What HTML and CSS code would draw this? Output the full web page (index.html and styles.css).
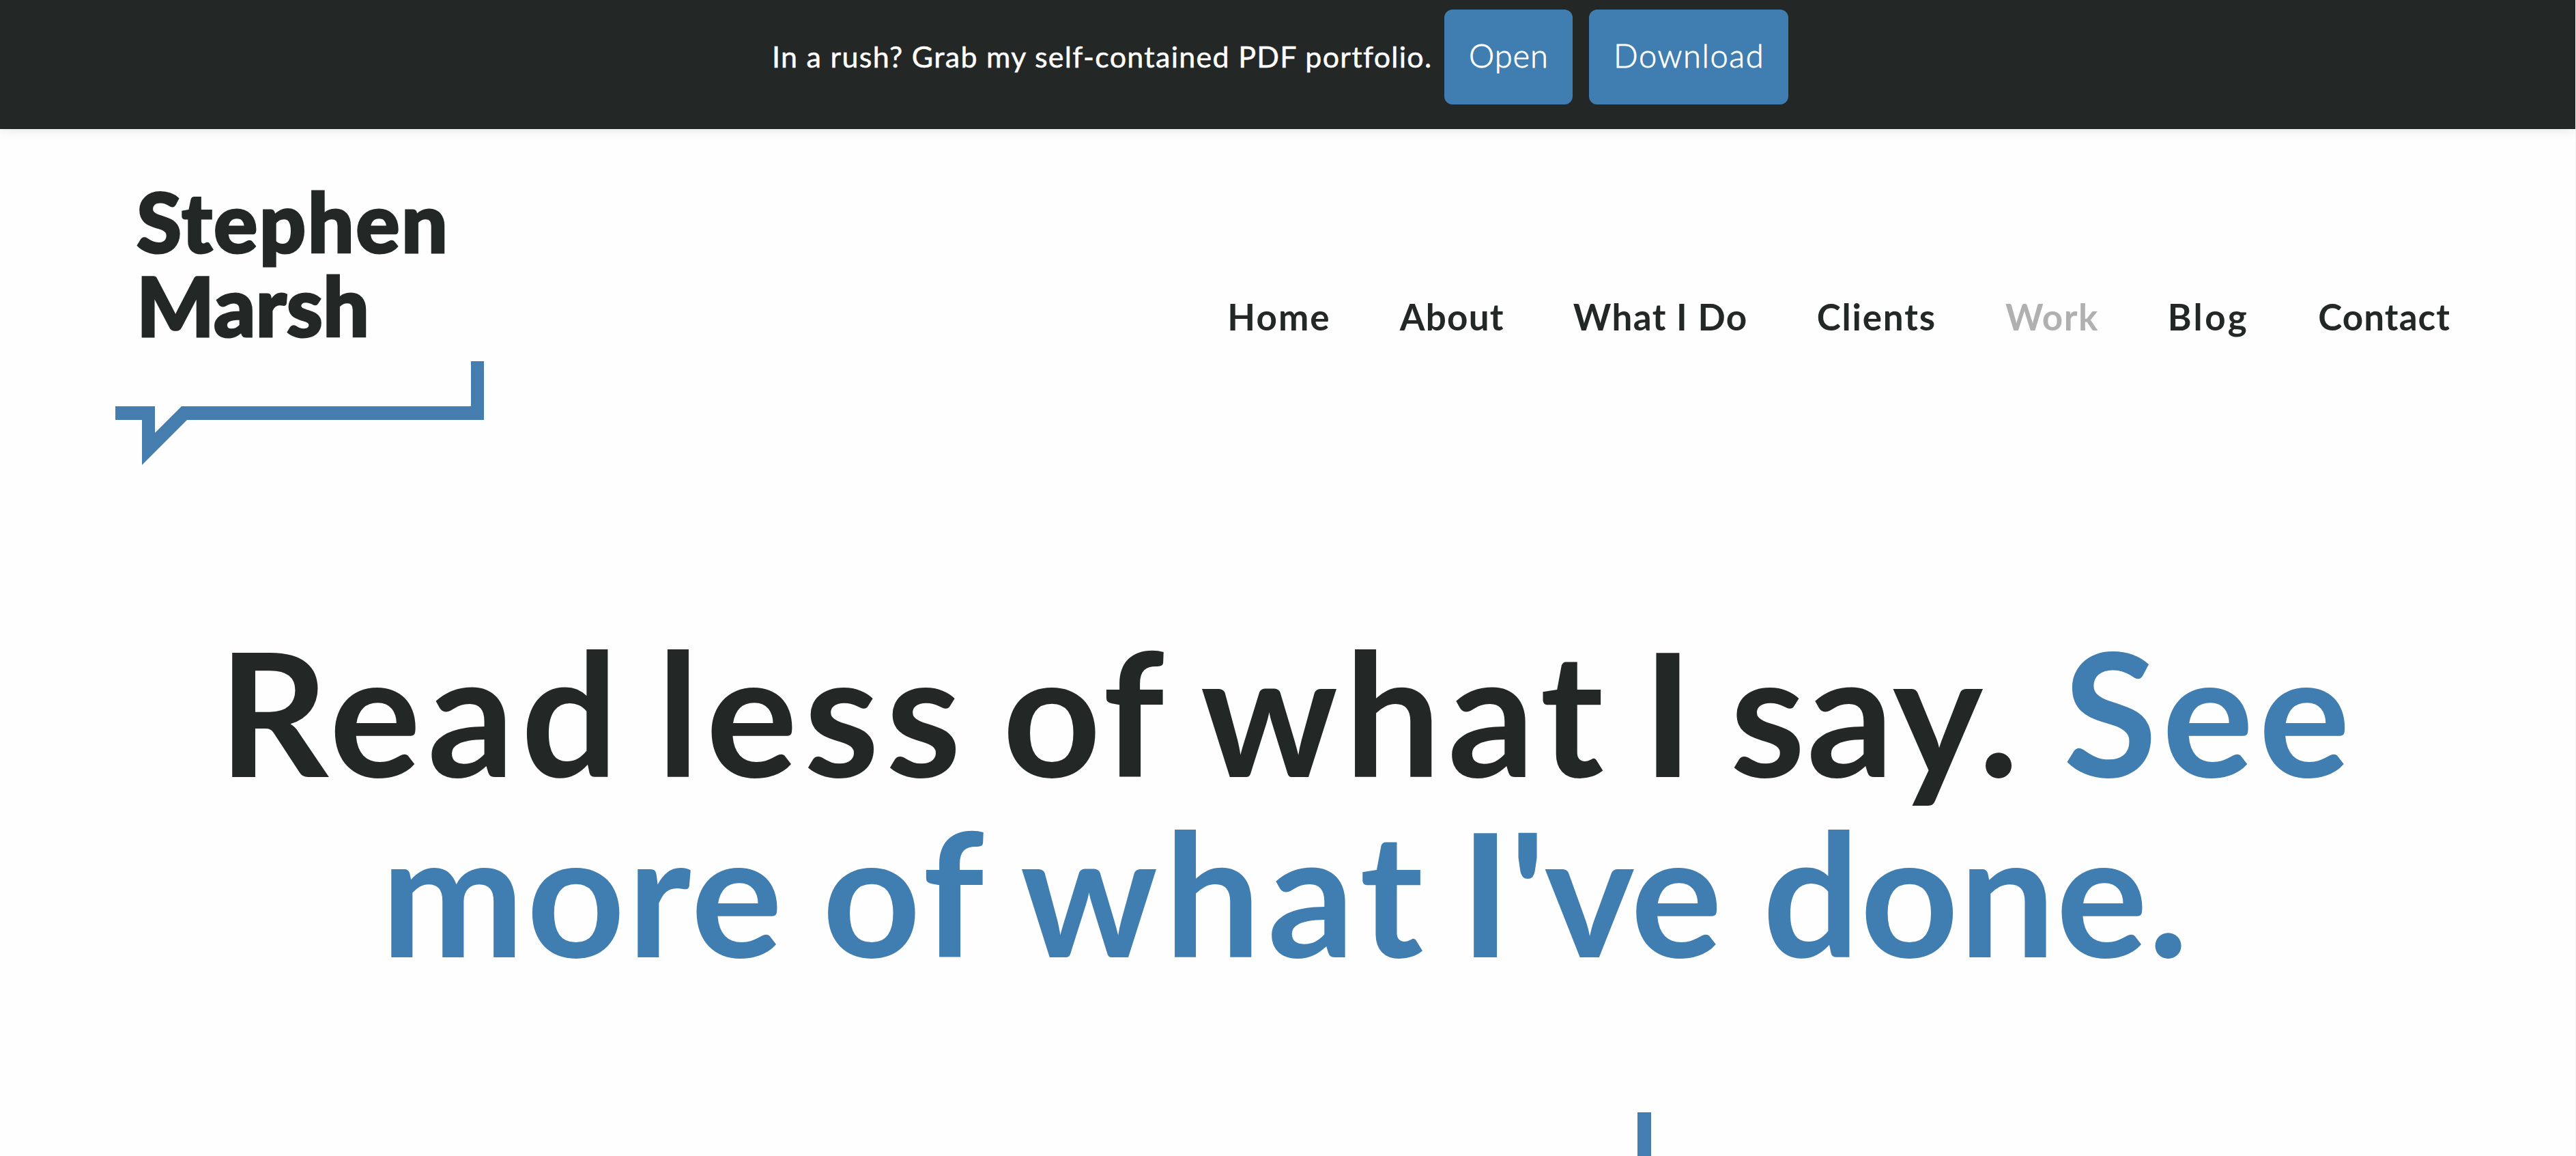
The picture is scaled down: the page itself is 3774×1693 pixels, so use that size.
FILE: index.html
```html
<!DOCTYPE html>
<html lang="en">
<head>
    <meta charset="UTF-8">
    <meta name="viewport" content="width=device-width, initial-scale=1.0">
    <title>Stephen Marsh - Work</title>
    <link rel="stylesheet" href="styles.css">
</head>
<body>
    <div class="notice">
        <p class="notice-text">In a rush? Grab my self-contained PDF portfolio.</p>
        <a class="button open" href="#">Open</a>
        <a class="button download" href="#">Download</a>
    </div>

    <header class="header">
        <a class="logo" href="#">
            <svg viewBox="0 -40 540 460" width="540" height="460">
                <text class="logo-name" x="31" y="105" textLength="456">Stephen</text>
                <text class="logo-name" x="31" y="228" textLength="341">Marsh</text>
                <polygon class="logo-bubble" points="0,330 58,330 58,369 97,330 521,330 521,264 540,264 540,350 105,350 39,416 39,350 0,350" />
            </svg>
        </a>
        <nav class="nav">
            <a class="home" href="#">Home</a>
            <a class="about" href="#">About</a>
            <a class="what" href="#">What I Do</a>
            <a class="clients" href="#">Clients</a>
            <a class="work active" href="#">Work</a>
            <a class="blog" href="#">Blog</a>
            <a class="contact" href="#">Contact</a>
        </nav>
    </header>

    <main>
        <h1 class="headline">
            <span class="line first">
                <span class="wide">Read</span>
                <span class="wide">less</span>
                <span class="of">of</span>
                <span class="wide">what</span>
                <span>I</span>
                <span class="say">say.</span>
                <span class="see blue">See</span>
            </span>
            <span class="line second blue">
                <span class="more">more</span>
                <span class="of">of</span>
                <span class="wide">what</span>
                <span class="ive">I've</span>
                <span class="done">done.</span>
            </span>
        </h1>
        <div class="divider"></div>
    </main>
</body>
</html>
```
FILE: styles.css
```css
* { box-sizing: border-box; }
body {
    margin: 0;
    height: 1693px;
    overflow: hidden;
    background: #fefefe;
    border-right: 1px solid #f3f3f3;
    color: #232726;
    font-family: Lato, sans-serif;
}
a { color: inherit; text-decoration: none; }

/* top notice */
.notice {
    display: flex;
    height: 189px;
    padding: 14px 0 0 1131px;
    background: #232726;
    box-shadow: 0 0 18px rgba(0, 0, 0, 0.12);
    color: #fff;
}
.notice-text {
    width: 985px;
    margin: 0;
    font-size: 43px;
    line-height: 138px;
    letter-spacing: 1.29px;
    white-space: nowrap;
    -webkit-text-stroke: 0.5px #fff;
}
.button {
    height: 139px;
    padding-left: 36px;
    border-radius: 12px;
    background: #407db1;
    font-size: 47px;
    font-weight: 300;
    line-height: 135px;
    -webkit-text-stroke: 0.8px #fff;
}
.open { width: 188px; margin-right: 24px; letter-spacing: 1px; }
.download { width: 292px; letter-spacing: 1.6px; }

/* header */
.header {
    display: flex;
    justify-content: space-between;
    height: 720px;
    padding: 36px 183px 0 169px;
}
.logo { height: 460px; }
.logo svg { display: block; }
.logo-name {
    fill: #232726;
    stroke: #232726;
    stroke-width: 3px;
    font-size: 120px;
    font-weight: 900;
}
.logo-bubble { fill: #447dae; }
.nav {
    display: flex;
    gap: 101.1px;
    margin-top: 208px;
    font-size: 53px;
    font-weight: 700;
    line-height: 61px;
    white-space: nowrap;
}
.home { letter-spacing: 2.05px; }
.about { letter-spacing: 1.2px; }
.what { letter-spacing: 1.39px; }
.clients { letter-spacing: 1.79px; }
.work { letter-spacing: 1.44px; }
.blog { letter-spacing: 3.38px; }
.contact { letter-spacing: 1.06px; }
.active { color: #b0b0b0; }

/* headline */
.headline {
    height: 720px;
    margin: 0;
    font-size: 251px;
    font-weight: 700;
    line-height: 264px;
}
.line { display: flex; gap: 47px; white-space: nowrap; }
.first { padding-left: 320px; }
.second { padding-left: 558px; }
.blue { color: #407db1; }
.wide { letter-spacing: 9.6px; }
.of { letter-spacing: 6px; }
.first .of { margin-left: 4px; }
.say { margin-left: 7px; letter-spacing: 2.1px; }
.see { margin-left: 16px; letter-spacing: 7.4px; }
.more { margin-right: 8px; letter-spacing: 3.3px; }
.ive { margin-left: -3px; letter-spacing: -2px; }
.done { margin-left: 14px; letter-spacing: 0.6px; }

.divider {
    width: 20px;
    height: 64px;
    margin-left: 2399px;
    background: #447db1;
}
```
